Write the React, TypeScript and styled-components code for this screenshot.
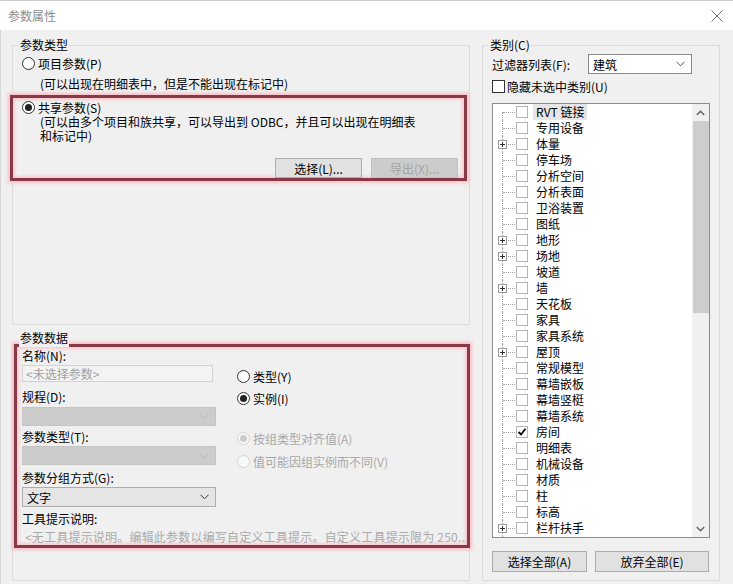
import React from "react";
import styled, { createGlobalStyle } from "styled-components";

const GlobalStyle = createGlobalStyle`
  html, body {
    margin: 0;
    padding: 0;
    background: #f0f0f0;
  }
  body {
    font-family: "Noto Sans CJK SC", "Noto Sans", sans-serif;
    font-size: 12px;
    color: #000;
  }
  * {
    box-sizing: border-box;
  }
`;

const Dialog = styled.div`
  width: 733px;
  height: 584px;
  background: #f0f0f0;
  overflow: hidden;
  display: flex;
  flex-direction: column;
`;

const TitleBar = styled.div`
  height: 30px;
  flex-shrink: 0;
  background: #fff;
  border-top: 1px solid #cfcfcf;
  display: flex;
  align-items: center;
  justify-content: space-between;
  padding: 0 10px 0 8px;
`;

const Title = styled.span`
  color: #8c8c8c;
  font-size: 12px;
  line-height: 18px;
`;

const Body = styled.div`
  flex: 1;
  display: flex;
  gap: 12px;
  padding: 15px 0 0 11px;
  border-left: 1px solid #d6d6d6;
`;

const LeftColumn = styled.div`
  width: 458px;
  display: flex;
  flex-direction: column;
  gap: 19px;
`;

const GroupBox = styled.div<{ $h: number; $w?: number }>`
  position: relative;
  height: ${(p) => p.$h}px;
  width: ${(p) => (p.$w ? `${p.$w}px` : "auto")};
  border: 1px solid #dcdcdc;
  padding: 8px 0 0 9px;
`;

const Caption = styled.span<{ $top: number }>`
  position: absolute;
  top: ${(p) => p.$top}px;
  left: 6px;
  padding: 0 1px;
  background: #f0f0f0;
  line-height: 18px;
`;

const RadioLabel = styled.div<{ $disabled?: boolean }>`
  display: flex;
  align-items: center;
  gap: 3px;
  height: 18px;
  white-space: nowrap;
  color: ${(p) => (p.$disabled ? "#a8a8a8" : "#000")};
`;

const RadioDot = styled.span<{ $checked?: boolean; $disabled?: boolean }>`
  width: 13px;
  height: 13px;
  flex-shrink: 0;
  border-radius: 50%;
  border: 1px solid ${(p) => (p.$disabled ? "#d4d4d4" : "#333")};
  background: ${(p) => (p.$disabled ? "#f8f8f8" : "#fff")};
  display: flex;
  align-items: center;
  justify-content: center;
  &::after {
    content: "";
    width: 7px;
    height: 7px;
    border-radius: 50%;
    background: ${(p) => (p.$disabled ? "#cbcbcb" : "#222")};
    display: ${(p) => (p.$checked ? "block" : "none")};
  }
`;

const Note = styled.div<{ $lh?: number; $mt?: number }>`
  margin-left: 18px;
  margin-top: ${(p) => p.$mt || 0}px;
  line-height: ${(p) => p.$lh || 18}px;
  white-space: nowrap;
`;

const RedFrame = styled.div`
  border: 3px solid #873a46;
  box-shadow: 0 0 3px 2px rgba(255, 175, 185, 0.75),
    inset 0 0 3px 2px rgba(255, 175, 185, 0.6);
`;

const SharedFrame = styled(RedFrame)`
  width: 457px;
  margin: 2px 0 0 -12px;
  padding: 0 6px 0 9px;
`;

const DataFrame = styled(RedFrame)`
  margin: -9px -1px 0 -8px;
  padding: 0 0 0 5px;
  height: 204px;
`;

const ButtonRow = styled.div`
  display: flex;
  justify-content: flex-end;
  gap: 9px;
  margin-top: 15px;
`;

const Button = styled.button<{ $w: number; $h?: number }>`
  width: ${(p) => p.$w}px;
  height: ${(p) => p.$h || 20}px;
  padding: 0;
  font-family: inherit;
  font-size: 12px;
  color: ${(p) => (p.disabled ? "#a3a3a3" : "#000")};
  background: ${(p) => (p.disabled ? "#cccccc" : "#e1e1e1")};
  border: 1px solid ${(p) => (p.disabled ? "#bfbfbf" : "#adadad")};
`;

const FieldGrid = styled.div`
  display: grid;
  grid-template-columns: 198px 1fr;
  column-gap: 17px;
`;

const FieldColumn = styled.div`
  display: flex;
  flex-direction: column;
`;

const OptionColumn = styled.div`
  display: flex;
  flex-direction: column;
  padding-top: 20px;
`;

const FieldLabel = styled.div<{ $mt?: number }>`
  line-height: 18px;
  margin-top: ${(p) => p.$mt || 0}px;
  white-space: nowrap;
`;

const TextBox = styled.div`
  width: 191px;
  height: 17px;
  border: 1px solid #d2d2d2;
  background: #f3f3f3;
  color: #a0a0a0;
  line-height: 15px;
  padding-left: 3px;
`;

const Combo = styled.div<{ $mt?: number; $h?: number; $disabled?: boolean; $w?: number; $white?: boolean }>`
  width: ${(p) => p.$w || 194}px;
  height: ${(p) => p.$h || 20}px;
  margin-top: ${(p) => p.$mt || 0}px;
  display: flex;
  align-items: center;
  justify-content: space-between;
  padding: 0 6px 0 4px;
  background: ${(p) => (p.$white ? "#fff" : p.$disabled ? "#cccccc" : "#e5e5e5")};
  border: 1px solid ${(p) => (p.$white ? "#8a8a8a" : p.$disabled ? "#c4c4c4" : "#adadad")};
  color: #000;
`;

const OptionSpacer = styled.div<{ $h: number }>`
  height: ${(p) => p.$h}px;
`;

const TipText = styled.div`
  padding-left: 3px;
  font-size: 12px;
  letter-spacing: 0.2px;
  line-height: 17px;
  color: #aaaaaa;
  white-space: nowrap;
`;

const RightGroup = styled(GroupBox)`
  display: flex;
  flex-direction: column;
`;

const FilterRow = styled.div`
  display: flex;
  align-items: center;
  height: 20px;
`;

const FilterLabel = styled.span`
  width: 96px;
  white-space: nowrap;
`;

const CheckRow = styled.div`
  display: flex;
  align-items: center;
  gap: 2px;
  height: 18px;
  margin-top: 3px;
`;

const CheckBox = styled.span<{ $dark?: boolean }>`
  width: ${(p) => (p.$dark ? 13 : 12)}px;
  height: ${(p) => (p.$dark ? 13 : 12)}px;
  flex-shrink: 0;
  background: #fff;
  border: 1px solid ${(p) => (p.$dark ? "#333" : "#b4b4b4")};
  display: flex;
  align-items: center;
  justify-content: center;
`;

const ListBox = styled.div`
  margin-top: 8px;
  width: 218px;
  height: 435px;
  border: 1px solid #8c8c8c;
  background: #fff;
  display: flex;
  overflow: hidden;
`;

const Tree = styled.div`
  flex: 1;
  overflow: hidden;
`;

const TreeRow = styled.div`
  display: flex;
  align-items: center;
  height: 16px;
  padding-left: 9px;
`;

const Connector = styled.span<{ $first?: boolean }>`
  position: relative;
  width: 13px;
  height: 16px;
  flex-shrink: 0;
  &::before {
    content: "";
    position: absolute;
    left: 0;
    top: ${(p) => (p.$first ? 8 : 0)}px;
    bottom: 0;
    border-left: 1px dotted #a0a0a0;
  }
  &::after {
    content: "";
    position: absolute;
    left: 1px;
    right: 0;
    top: 8px;
    border-top: 1px dotted #a0a0a0;
  }
`;

const Expander = styled.svg`
  position: absolute;
  left: -4px;
  top: 4px;
  z-index: 1;
`;

const ItemCheck = styled(CheckBox)`
  margin-left: 1px;
`;

const ItemText = styled.span<{ $selected?: boolean }>`
  margin-left: 5px;
  padding: 0 3px;
  line-height: 16px;
  white-space: nowrap;
  background: ${(p) => (p.$selected ? "#e6e6e6" : "transparent")};
`;

const ScrollBar = styled.div`
  width: 17px;
  flex-shrink: 0;
  background: #f0f0f0;
  display: flex;
  flex-direction: column;
`;

const ScrollArrow = styled.div`
  height: 17px;
  display: flex;
  align-items: center;
  justify-content: center;
  flex-shrink: 0;
`;

const ScrollTrack = styled.div`
  flex: 1;
  display: flex;
  flex-direction: column;
`;

const ScrollThumb = styled.div`
  height: 192px;
  margin-left: 1px;
  background: #cdcdcd;
`;

const BottomButtons = styled.div`
  display: flex;
  gap: 8px;
  margin-top: 13px;
`;

const Chevron = ({ color }: { color: string }) => (
  <svg width="9" height="6" viewBox="0 0 9 6">
    <polyline points="0.5,0.8 4.5,4.8 8.5,0.8" fill="none" stroke={color} strokeWidth="1" />
  </svg>
);

const Radio = ({ label, checked, disabled }: { label: string; checked?: boolean; disabled?: boolean }) => (
  <RadioLabel $disabled={disabled}>
    <RadioDot $checked={checked} $disabled={disabled} />
    {label}
  </RadioLabel>
);

const items: { name: string; expand?: boolean; checked?: boolean; selected?: boolean }[] = [
  { name: "RVT 链接", selected: true },
  { name: "专用设备" },
  { name: "体量", expand: true },
  { name: "停车场" },
  { name: "分析空间" },
  { name: "分析表面" },
  { name: "卫浴装置" },
  { name: "图纸" },
  { name: "地形", expand: true },
  { name: "场地", expand: true },
  { name: "坡道" },
  { name: "墙", expand: true },
  { name: "天花板" },
  { name: "家具" },
  { name: "家具系统" },
  { name: "屋顶", expand: true },
  { name: "常规模型" },
  { name: "幕墙嵌板" },
  { name: "幕墙竖梃" },
  { name: "幕墙系统" },
  { name: "房间", checked: true },
  { name: "明细表" },
  { name: "机械设备" },
  { name: "材质" },
  { name: "柱" },
  { name: "标高" },
  { name: "栏杆扶手", expand: true },
  { name: "楼板", expand: true },
];

export default function App() {
  return (
    <Dialog>
      <GlobalStyle />
      <TitleBar>
        <Title>参数属性</Title>
        <svg width="12" height="12" viewBox="0 0 12 12">
          <line x1="0.5" y1="0.5" x2="11.5" y2="11.5" stroke="#6e6e6e" strokeWidth="1" />
          <line x1="11.5" y1="0.5" x2="0.5" y2="11.5" stroke="#6e6e6e" strokeWidth="1" />
        </svg>
      </TitleBar>
      <Body>
        <LeftColumn>
          <GroupBox $h={280}>
            <Caption $top={-10}>参数类型</Caption>
            <Radio label="项目参数(P)" />
            <Note $mt={3}>(可以出现在明细表中，但是不能出现在标记中)</Note>
            <SharedFrame>
              <Radio label="共享参数(S)" checked />
              <Note $lh={14} $mt={-1}>
                (可以由多个项目和族共享，可以导出到 ODBC，并且可以出现在明细表
                <br />
                和标记中)
              </Note>
              <ButtonRow>
                <Button $w={87}>选择(L)...</Button>
                <Button $w={87} disabled>
                  导出(X)...
                </Button>
              </ButtonRow>
            </SharedFrame>
          </GroupBox>
          <GroupBox $h={237}>
            <Caption $top={-16}>参数数据</Caption>
            <DataFrame>
              <FieldGrid>
                <FieldColumn>
                  <FieldLabel>名称(N):</FieldLabel>
                  <TextBox>&lt;未选择参数&gt;</TextBox>
                  <FieldLabel $mt={6}>规程(D):</FieldLabel>
                  <Combo $mt={1} $h={19} $disabled>
                    <span />
                    <Chevron color="#b8b8b8" />
                  </Combo>
                  <FieldLabel $mt={2}>参数类型(T):</FieldLabel>
                  <Combo $h={19} $disabled>
                    <span />
                    <Chevron color="#b8b8b8" />
                  </Combo>
                  <FieldLabel $mt={4}>参数分组方式(G):</FieldLabel>
                  <Combo>
                    <span>文字</span>
                    <Chevron color="#333" />
                  </Combo>
                </FieldColumn>
                <OptionColumn>
                  <Radio label="类型(Y)" />
                  <OptionSpacer $h={4} />
                  <Radio label="实例(I)" checked />
                  <OptionSpacer $h={22} />
                  <Radio label="按组类型对齐值(A)" checked disabled />
                  <OptionSpacer $h={5} />
                  <Radio label="值可能因组实例而不同(V)" disabled />
                </OptionColumn>
              </FieldGrid>
              <FieldLabel $mt={3}>工具提示说明:</FieldLabel>
              <TipText>&lt;无工具提示说明。编辑此参数以编写自定义工具提示。自定义工具提示限为 250...</TipText>
            </DataFrame>
          </GroupBox>
        </LeftColumn>
        <RightGroup $h={536} $w={238}>
          <Caption $top={-10}>类别(C)</Caption>
          <FilterRow>
            <FilterLabel>过滤器列表(F):</FilterLabel>
            <Combo $w={104} $white>
              <span>建筑</span>
              <Chevron color="#555" />
            </Combo>
          </FilterRow>
          <CheckRow>
            <CheckBox $dark />
            <span>隐藏未选中类别(U)</span>
          </CheckRow>
          <ListBox>
            <Tree>
              {items.map((it, i) => (
                <TreeRow key={it.name}>
                  <Connector $first={i === 0}>
                    {it.expand && (
                      <Expander width="9" height="9" viewBox="0 0 9 9">
                        <rect x="0.5" y="0.5" width="8" height="8" fill="#fff" stroke="#9a9a9a" />
                        <line x1="2" y1="4.5" x2="7" y2="4.5" stroke="#333" />
                        <line x1="4.5" y1="2" x2="4.5" y2="7" stroke="#333" />
                      </Expander>
                    )}
                  </Connector>
                  <ItemCheck>
                    {it.checked && (
                      <svg width="10" height="10" viewBox="0 0 10 10">
                        <polyline points="1.5,5 4,7.5 8.5,1.8" fill="none" stroke="#000" strokeWidth="1.8" />
                      </svg>
                    )}
                  </ItemCheck>
                  <ItemText $selected={it.selected}>{it.name}</ItemText>
                </TreeRow>
              ))}
            </Tree>
            <ScrollBar>
              <ScrollArrow>
                <svg width="9" height="6" viewBox="0 0 9 6">
                  <polyline points="0.8,5 4.5,1.3 8.2,5" fill="none" stroke="#606060" strokeWidth="1.4" />
                </svg>
              </ScrollArrow>
              <ScrollTrack>
                <ScrollThumb />
              </ScrollTrack>
              <ScrollArrow>
                <svg width="9" height="6" viewBox="0 0 9 6">
                  <polyline points="0.8,1 4.5,4.7 8.2,1" fill="none" stroke="#606060" strokeWidth="1.4" />
                </svg>
              </ScrollArrow>
            </ScrollBar>
          </ListBox>
          <BottomButtons>
            <Button $w={95} $h={21}>
              选择全部(A)
            </Button>
            <Button $w={114} $h={21}>
              放弃全部(E)
            </Button>
          </BottomButtons>
        </RightGroup>
      </Body>
    </Dialog>
  );
}
